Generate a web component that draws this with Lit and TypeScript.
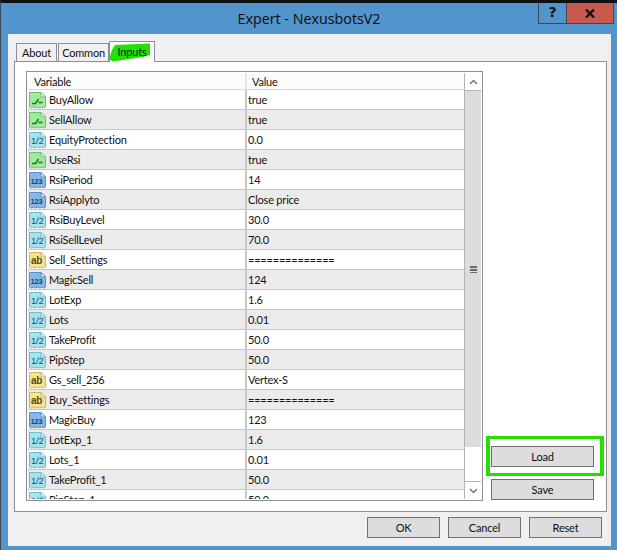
import { css, html, svg, LitElement } from "lit";
import { customElement } from "lit/decorators.js";

type Kind = "bool" | "dbl" | "int" | "str";

// [name, kind, value] in the order the dialog lists them
const ROWS: [string, Kind, string][] = [
  ["BuyAllow", "bool", "true"],
  ["SellAllow", "bool", "true"],
  ["EquityProtection", "dbl", "0.0"],
  ["UseRsi", "bool", "true"],
  ["RsiPeriod", "int", "14"],
  ["RsiApplyto", "int", "Close price"],
  ["RsiBuyLevel", "dbl", "30.0"],
  ["RsiSellLevel", "dbl", "70.0"],
  ["Sell_Settings", "str", "=============="],
  ["MagicSell", "int", "124"],
  ["LotExp", "dbl", "1.6"],
  ["Lots", "dbl", "0.01"],
  ["TakeProfit", "dbl", "50.0"],
  ["PipStep", "dbl", "50.0"],
  ["Gs_sell_256", "str", "Vertex-S"],
  ["Buy_Settings", "str", "=============="],
  ["MagicBuy", "int", "123"],
  ["LotExp_1", "dbl", "1.6"],
  ["Lots_1", "dbl", "0.01"],
  ["TakeProfit_1", "dbl", "50.0"],
  ["PipStep_1", "dbl", "50.0"],
];

const PALETTE: Record<Kind, { fill: string; edge: string }> = {
  bool: { fill: "#a0ea9c", edge: "#6cc074" },
  dbl: { fill: "#a8e4f0", edge: "#6cbccf" },
  int: { fill: "#86b6ea", edge: "#5a8fc8" },
  str: { fill: "#f8e48c", edge: "#cdb45a" },
};

function typeIcon(kind: Kind) {
  const c = PALETTE[kind];
  const body = "M0.5 0.5H12L16.5 5V15L14.5 16L12.5 15L10.5 16L8.5 15L6.5 16L4.5 15L2.5 16L0.5 15Z";
  return html`<svg class="type" width="17" height="17" viewBox="0 0 17 17">
    <path d=${body} fill=${c.fill} stroke=${c.edge} stroke-width="1" />
    <path d="M12 0.5V5H16.5Z" fill="#f4fbfb" stroke=${c.edge} stroke-width="1" />
    ${kind === "bool"
      ? svg`<path d="M3 11.5H6.5L9.5 7M9.5 10.5H13.5" fill="none" stroke="#157a2a" stroke-width="1.5" />`
      : kind === "dbl"
        ? svg`<text x="2" y="11.5" font-size="9.5" font-family="Liberation Sans" fill="#14506e">1/2</text>`
        : kind === "int"
          ? svg`<text x="1.8" y="12" font-size="7.2" font-weight="700" font-family="Liberation Sans" fill="#0f3a78">123</text>`
          : svg`<text x="2" y="11.5" font-size="10" font-weight="700" font-family="Liberation Sans" fill="#5a4a10">ab</text>`}
  </svg>`;
}

@customElement("app-root")
export class AppRoot extends LitElement {
  static styles = css`
    :host {
      display: block;
      width: 617px;
      height: 550px;
      font-family: Lato, "Liberation Sans", sans-serif;
      font-size: 11px;
      letter-spacing: -0.2px;
      color: #111;
    }
    * {
      box-sizing: border-box;
    }
    .window {
      width: 617px;
      height: 550px;
      background: #5294cc;
      border-top: 3px solid #101010;
      border-left: 1px solid #3c4a58;
      display: flex;
      flex-direction: column;
      overflow: hidden;
    }
    .titlebar {
      height: 31px;
      flex: none;
      display: grid;
      grid-template-columns: 1fr auto 1fr;
      align-items: start;
    }
    .title {
      grid-column: 2;
      font-family: "Open Sans", sans-serif;
      font-size: 14.3px;
      letter-spacing: 0;
      line-height: 31px;
      color: #0c0c0c;
    }
    .controls {
      grid-column: 3;
      justify-self: end;
      display: flex;
      margin-right: 3px;
      height: 21px;
      border: 1px solid #3f4850;
      border-top: none;
    }
    .help {
      width: 28px;
      text-align: center;
      line-height: 19px;
      font-size: 14px;
      font-weight: 700;
      font-family: "DejaVu Sans", sans-serif;
      border-right: 1px solid #3f4850;
    }
    .close {
      width: 46px;
      background: #c75b50;
      display: flex;
      align-items: center;
      justify-content: center;
    }
    .client {
      flex: 1;
      margin: 0 6px 4px 7px;
      background: #f0f0f0;
      padding: 7px 4px 0 6px;
      display: flex;
      flex-direction: column;
    }
    .tabs {
      display: flex;
      height: 20px;
      padding-left: 2px;
      align-items: flex-end;
      position: relative;
      z-index: 1;
    }
    .tab {
      height: 18px;
      margin-right: 1px;
      border: 1px solid #8e8e96;
      border-bottom: none;
      background: #f0f0f0;
      text-align: center;
      line-height: 18px;
    }
    .tab.about {
      width: 41px;
    }
    .tab.common {
      width: 51px;
      margin-right: 0;
    }
    .tab.inputs {
      width: 46px;
      height: 21px;
      margin-bottom: -1px;
      background: #fff;
      line-height: 20px;
      position: relative;
    }
    .tab .marker {
      position: absolute;
      left: -1px;
      top: 1px;
    }
    .tab .label {
      position: relative;
    }
    .panel {
      width: 593px;
      height: 451px;
      border: 1px solid #8e8e96;
      background: #fff;
      padding: 9px 11px 10px 11px;
      display: flex;
      gap: 8px;
    }
    .list {
      width: 457px;
      height: 430px;
      flex: none;
      border: 1px solid #8e8e96;
      padding: 1px;
      display: flex;
      background: #fff;
    }
    .grid {
      width: 436px;
      flex: none;
      overflow: hidden;
    }
    .head {
      height: 17px;
      display: grid;
      grid-template-columns: 217px 1fr;
      border-bottom: 1px solid #d6d6d6;
      background: #fcfcfc;
      line-height: 17px;
    }
    .head div {
      padding-left: 6px;
    }
    .head div + div {
      border-left: 2px solid #e4e4e4;
      padding-left: 5px;
    }
    .row {
      height: 20px;
      display: grid;
      grid-template-columns: 217px 1fr;
      border-bottom: 1px solid #c8c8c8;
      line-height: 20px;
    }
    .row:nth-child(even) {
      background: #ebebeb;
    }
    .name {
      display: flex;
      align-items: center;
      gap: 3px;
      padding-left: 1px;
    }
    .type {
      flex: none;
    }
    .val {
      border-left: 2px solid #c8c8c8;
      padding-left: 1px;
    }
    .scroll {
      width: 17px;
      flex: none;
      display: flex;
      flex-direction: column;
      border-left: 1px solid #b5b5b5;
    }
    .arrow {
      height: 17px;
      flex: none;
      display: flex;
      align-items: center;
      justify-content: center;
      background: #fff;
    }
    .thumb {
      height: 357px;
      flex: none;
      background: #dcdcdc;
      border-top: 1px solid #b5b5b5;
      display: flex;
      align-items: center;
      justify-content: center;
    }
    .grip {
      width: 7px;
      height: 7px;
      background: repeating-linear-gradient(#6a6a6a 0 2px, #dcdcdc 2px 3px);
    }
    .track {
      flex: 1;
      background: #fff;
      border-bottom: 1px solid #b5b5b5;
    }
    .side {
      flex: 1;
      display: flex;
      flex-direction: column;
      justify-content: flex-end;
      gap: 12px;
      padding-bottom: 1px;
    }
    .btn {
      height: 21px;
      background: #dddddd;
      border: 1px solid #707070;
      text-align: center;
      line-height: 19px;
      display: block;
    }
    .side .btn {
      width: 103px;
    }
    .callout {
      position: relative;
    }
    .callout::after {
      content: "";
      box-sizing: border-box;
      position: absolute;
      left: -5px;
      top: -10px;
      width: 118px;
      height: 40px;
      border: solid #22e000;
      border-width: 3px 4px;
    }
    .footer {
      display: flex;
      justify-content: flex-end;
      gap: 8px;
      padding: 5px 5px 0 0;
    }
    .footer .btn {
      width: 73px;
    }
    .footer .btn.default {
      border-color: #3c7fb1;
    }
  `;

  render() {
    return html`
      <div class="window">
        <div class="titlebar">
          <div class="title">Expert - NexusbotsV2</div>
          <div class="controls">
            <div class="help">?</div>
            <div class="close">
              <svg width="10" height="9" viewBox="0 0 10 9"><path d="M1 0.5L9 8.5M9 0.5L1 8.5" stroke="#111" stroke-width="2.4" /></svg>
            </div>
          </div>
        </div>
        <div class="client">
          <div class="tabs">
            <div class="tab about">About</div>
            <div class="tab common">Common</div>
            <div class="tab inputs">
              <svg class="marker" width="44" height="19" viewBox="0 0 44 19">
                <path d="M6 2L41 0.5V12L34 14L4 18.5L0 16L3 7Z" fill="#22e000" />
              </svg>
              <span class="label">Inputs</span>
            </div>
          </div>
          <div class="panel">
            <div class="list">
              <div class="grid">
                <div class="head"><div>Variable</div><div>Value</div></div>
                <div class="rows">
                  ${ROWS.map(
                    ([name, kind, value]) => html`<div class="row">
                      <div class="name">${typeIcon(kind)}<span>${name}</span></div>
                      <div class="val">${value}</div>
                    </div>`
                  )}
                </div>
              </div>
              <div class="scroll">
                <div class="arrow">
                  <svg width="9" height="6" viewBox="0 0 9 6"><path d="M1 5L4.5 1.5L8 5" fill="none" stroke="#707070" stroke-width="1.4" /></svg>
                </div>
                <div class="thumb"><div class="grip"></div></div>
                <div class="track"></div>
                <div class="arrow">
                  <svg width="9" height="6" viewBox="0 0 9 6"><path d="M1 1L4.5 4.5L8 1" fill="none" stroke="#707070" stroke-width="1.4" /></svg>
                </div>
              </div>
            </div>
            <div class="side">
              <div class="callout"><div class="btn">Load</div></div>
              <div class="btn">Save</div>
            </div>
          </div>
          <div class="footer">
            <div class="btn default">OK</div>
            <div class="btn">Cancel</div>
            <div class="btn">Reset</div>
          </div>
        </div>
      </div>
    `;
  }
}
